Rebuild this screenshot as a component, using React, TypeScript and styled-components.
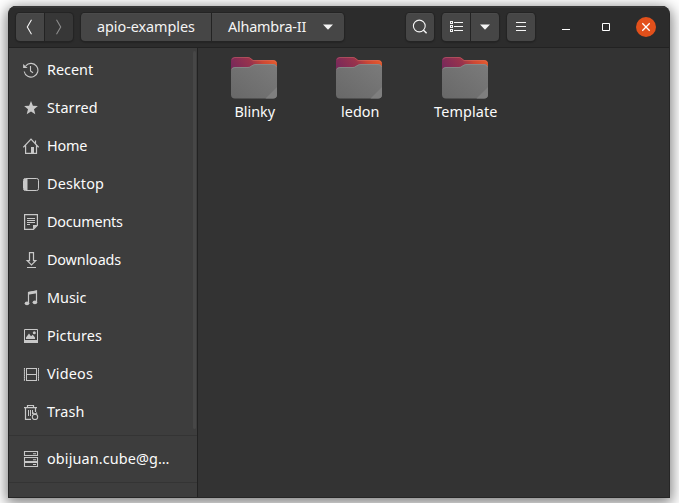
import React from "react";
import styled, { createGlobalStyle } from "styled-components";

const GlobalStyle = createGlobalStyle`
  * { box-sizing: border-box; }
  html, body { margin: 0; background: #fff; overflow: hidden; }
  svg { display: block; flex: none; }
`;

const Desktop = styled.div`
  width: 679px;
  height: 503px;
  padding: 6px 9px 5px 8px;
  overflow: hidden;
  background: #fff;
  font-family: "Noto Sans", sans-serif;
  font-size: 14.4px;
  color: #fbfbfb;
`;

const Window = styled.main`
  width: 662px;
  height: 492px;
  display: flex;
  flex-direction: column;
  border: 1px solid #262626;
  border-top: 0;
  border-radius: 8px 8px 0 0;
  overflow: hidden;
  background: #333;
  box-shadow: 0 3px 14px 2px rgba(0, 0, 0, 0.5);
`;

const HeaderBar = styled.header`
  height: 42px;
  flex: none;
  display: flex;
  align-items: flex-start;
  padding: 7px 13px 0 7px;
  background: #2c2c2c;
  border-bottom: 1px solid #222;
  box-shadow: inset 0 2px #363636;
`;

const ButtonGroup = styled.div<{ $gap: number }>`
  display: flex;
  gap: 1px;
  height: 28px;
  margin-right: ${(p) => p.$gap}px;
  border-radius: 4px;
  overflow: hidden;
  background: #232323;
  box-shadow: 0 0 0 1px #242424, 0 1px 1px 1px #252525;
  flex: none;
`;

const HeaderButton = styled.button<{ $width?: number; $dim?: boolean }>`
  width: ${(p) => p.$width ?? 28}px;
  height: 28px;
  display: flex;
  align-items: center;
  justify-content: center;
  padding: 0;
  border: 0;
  background: ${(p) => (p.$dim ? "#373737" : "#464646")};
  color: ${(p) => (p.$dim ? "#8d8d8d" : "#f4f4f4")};
  box-shadow: ${(p) => (p.$dim ? "none" : "inset 0 1px #4b4b4b")};
  font: inherit;
`;

const Label = styled.span<{ $track?: number }>`
  white-space: nowrap;
  line-height: 20px;
  letter-spacing: ${(p) => p.$track ?? 0}px;
`;

const PathButton = styled(HeaderButton)`
  justify-content: flex-start;
  padding-left: 16px;
  & > svg { margin: 0 11px 0 auto; }
`;

const Spacer = styled.div`
  flex: 1;
`;

const WindowControls = styled.div`
  display: flex;
  align-items: center;
  gap: 32px;
  width: 94px;
  height: 28px;
  & > svg:last-child { margin-left: -6px; }
`;

const Body = styled.div`
  flex: 1;
  min-height: 0;
  display: flex;
`;

const Sidebar = styled.nav`
  width: 189px;
  flex: none;
  display: flex;
  border-right: 1px solid #222;
  background: #3d3d3d;
`;

const Places = styled.div`
  flex: 1;
  min-width: 0;
  padding-top: 3px;
`;

const PlaceRow = styled.div`
  height: 38px;
  display: flex;
  align-items: center;
  gap: 8px;
  padding-left: 14px;
  color: #fbfbfb;
  & > svg { color: #c8c8c8; }
`;

const Divider = styled.div`
  height: 1px;
  margin: 4px -4px 4px 0;
  background: #343434;
`;

const ScrollTrack = styled.div`
  width: 4px;
  padding-top: 3px;
`;

const ScrollThumb = styled.div`
  width: 3px;
  height: 378px;
  border-radius: 2px;
  background: #474747;
`;

const FileGrid = styled.section`
  flex: 1;
  display: grid;
  grid-template-columns: repeat(3, 105.5px);
  align-content: start;
  padding: 9px 0 0 4px;
`;

const FileTile = styled.div`
  display: flex;
  flex-direction: column;
  align-items: center;
  gap: 3px;
  & > svg { margin-right: 2px; }
`;

const line = { fill: "none", stroke: "currentColor" };

const Arrow = ({ flip }: { flip?: boolean }) => (
  <svg width="16" height="16" viewBox="0 0 16 16">
    <path {...line} strokeWidth="1.1" d={flip ? "M5.5.8 9.700 8l-4.200 7.200" : "M9.500.8 5.300 8l4.200 7.200"} />
  </svg>
);

const Caret = () => (
  <svg width="10" height="6" viewBox="0 0 10 6">
    <path fill="currentColor" d="M0 .5h10L5 5.700z" />
  </svg>
);

const SearchIcon = () => (
  <svg width="16" height="16" viewBox="0 0 16 16">
    <circle {...line} strokeWidth="1.100" cx="7.300" cy="7" r="5.900" />
    <path {...line} strokeWidth="1.500" d="m11.300 11 3.300 3.300" />
  </svg>
);

const ListIcon = () => (
  <svg width="14" height="12" viewBox="0 0 14 12" shapeRendering="crispEdges">
    <path {...line} d="M1.500.5h2v2h-2zM1.500 4.500h2v2h-2zM1.500 8.500h2v2h-2zM5 1.500h9M5 5.500h9M5 9.500h9" />
  </svg>
);

const MenuIcon = () => (
  <svg width="10" height="10" viewBox="0 0 10 10" shapeRendering="crispEdges">
    <path {...line} d="M0 .5h10M0 4.500h10M0 8.500h10" />
  </svg>
);

const MinimizeIcon = () => (
  <svg width="8" height="8" viewBox="0 0 8 8">
    <path fill="#fff" d="M0 6h8v1H0z" />
  </svg>
);

const MaximizeIcon = () => (
  <svg width="8" height="8" viewBox="0 0 8 8">
    <path fill="none" stroke="#fff" d="M.5.5h7v7h-7z" />
  </svg>
);

const CloseIcon = () => (
  <svg width="20" height="20" viewBox="0 0 20 20">
    <circle cx="10" cy="10" r="10" fill="#e2501b" />
    <path d="m6.300 6.300 7.400 7.400m0-7.400-7.400 7.400" stroke="#fff" strokeWidth="1.300" />
  </svg>
);

const glyphs: Record<string, React.ReactNode> = {
  recent: (
    <>
      <path {...line} strokeWidth="1.100" d="M2.700 3.800A6.900 6.900 0 1 1 1.200 9.500M7.500 4v5l2.500 1.800" />
      <path fill="currentColor" d="M.1 2v4h4.500z" />
    </>
  ),
  star: <path fill="currentColor" d="m8 1 1.900 4.800 5 .3-3.900 3.200 1.300 5L8 11.500l-4.300 2.800 1.300-5L1.100 6.100l5-.3z" />,
  home: (
    <>
      <path {...line} strokeWidth="1.200" d="M.4 9.300 8 1.100l7.600 8.200M2.600 7.500v7.900h10.900V7.500M12.500 5.500V2.500" />
      <path fill="currentColor" d="M8 9h3v6.500H8z" />
    </>
  ),
  desktop: (
    <>
      <rect {...line} x=".5" y="2.500" width="15" height="12" rx="1.800" />
      <path fill="currentColor" d="M1 3h3.500v11H1z" />
    </>
  ),
  documents: (
    <>
      <path {...line} strokeWidth="1.200" d="M1.600.6h12.800v10.600l-4 4.200H1.600z" />
      <path {...line} d="M4 4.500h8M4 6.500h8M4 8.500h8M4 10.500h3" />
      <path fill="currentColor" d="M10 15.500V11h4.500z" />
    </>
  ),
  downloads: <path {...line} strokeWidth="1.200" d="M6.500.6h4v8h2.300l-4.300 4.300-4.300-4.300h2.300zM4 15.500h9" />,
  music: (
    <>
      <path {...line} strokeWidth="1.200" d="M5.500 13V2.500L13.500 1v11" />
      <path fill="currentColor" d="M5 2 14 .4v2.800L5 4.800z" />
      <ellipse fill="currentColor" cx="4" cy="13.300" rx="2.300" ry="1.900" />
      <ellipse fill="currentColor" cx="11.900" cy="12.300" rx="2.300" ry="1.900" />
    </>
  ),
  pictures: (
    <>
      <path {...line} d="M1.500 1.500h13v12h-13z" />
      <path fill="currentColor" d="M1 12h14v3H1zM3 11V9.500L6 5.500l2 2.800 1.800-1.500 2.200 2.700V11z" />
      <circle fill="currentColor" cx="11.300" cy="4.700" r="1.500" />
    </>
  ),
  videos: (
    <>
      <path {...line} d="M3.500 2v13M13.500 2v13M3 2.500h11M3 8.500h11M3 14.500h11" />
      <path {...line} strokeDasharray="1.200 1" d="M1.500 2v13M15.500 2v13" />
      <path {...line} strokeWidth=".8" d="M1.400 2v13M15.600 2v13" />
    </>
  ),
  trash: (
    <>
      <path {...line} strokeWidth="1.200" d="M1 3.600h13M4.500 3V1.500h6V3M2.500 4v11.400H8M12.500 4v4" />
      <path {...line} d="M5.500 6v6M7.500 6v6M9.500 6v4" />
      <circle {...line} strokeWidth="1.100" cx="12" cy="12.900" r="2.700" />
      <path {...line} strokeWidth="1.100" d="m9.800 8.800 2.200 1.500 2.100-1.500" />
    </>
  ),
  server: (
    <path {...line} strokeWidth="1.100" d="M1.500.5h13v4h-13zM1.500 6.500h13v4h-13zM1.500 11.500h13v4h-13zM10 2.700h3M10 8.700h3M10 13.500h3" />
  ),
};

const PlaceIcon = ({ name }: { name: string }) => (
  <svg width="16" height="16" viewBox="0 0 16 16">{glyphs[name]}</svg>
);

const FolderIcon = ({ id }: { id: string }) => (
  <svg width="46" height="42" viewBox="0 0 46 42">
    <defs>
      <linearGradient id={`${id}-back`} x1="0" x2="1" y1=".35" y2="0">
        <stop offset="0" stopColor="#79295a" />
        <stop offset=".42" stopColor="#99334c" />
        <stop offset=".65" stopColor="#cc4835" />
        <stop offset="1" stopColor="#ee6029" />
      </linearGradient>
      <linearGradient id={`${id}-front`} x1="0" x2="1" y1="1" y2="0">
        <stop offset="0" stopColor="#686868" />
        <stop offset="1" stopColor="#7b7b7b" />
      </linearGradient>
    </defs>
    <path fill={`url(#${id}-back)`} d="M0 4q0-4 4-4h13q2 0 3.200 1.500L22 3h20q4 0 4 4v15H0z" />
    <path fill="none" stroke="#d47770" strokeOpacity=".4" d="M1 2.500Q2 .5 4 .5h13q2 0 3.200 1.500L22 3.500h20q2.500 0 3.500 2.500" />
    <path fill={`url(#${id}-front)`} d="M0 14q0-4 4-4h13q2 0 3.200-1.300L22 7.700Q23 7 25 7h17q4 0 4 4v26.500q0 4-4 4H4q-4 0-4-4z" />
    <path fill="none" stroke="#929292" strokeOpacity=".6" d="M.8 12.500q1-2 3.200-2h13q2 0 3.200-1.300L22 8.200q1-.7 3-.7h17q2.500 0 3.500 2.500" />
    <path fill="#7f7f7f" d="M34.500 41.500 46 30v7.500q0 4-4 4z" />
  </svg>
);

const places = [
  { icon: "recent", text: "Recent", track: 0 },
  { icon: "star", text: "Starred", track: 0.15 },
  { icon: "home", text: "Home", track: -0.2 },
  { icon: "desktop", text: "Desktop", track: 0.15 },
  { icon: "documents", text: "Documents", track: -0.2 },
  { icon: "downloads", text: "Downloads", track: -0.15 },
  { icon: "music", text: "Music", track: 0 },
  { icon: "pictures", text: "Pictures", track: 0.1 },
  { icon: "videos", text: "Videos", track: 0.2 },
  { icon: "trash", text: "Trash", track: 0.15 },
];

const folders = [
  { text: "Blinky", track: 0 },
  { text: "ledon", track: 0 },
  { text: "Template", track: 0.1 },
];

export default function App() {
  return (
    <>
      <GlobalStyle />
      <Desktop>
        <Window>
          <HeaderBar>
            <ButtonGroup $gap={8}>
              <HeaderButton aria-label="Back"><Arrow /></HeaderButton>
              <HeaderButton $dim aria-label="Forward"><Arrow flip /></HeaderButton>
            </ButtonGroup>
            <ButtonGroup $gap={0}>
              <PathButton $width={130}><Label $track={-0.05}>apio-examples</Label></PathButton>
              <PathButton $width={132}><Label $track={-0.2}>Alhambra-II</Label><Caret /></PathButton>
            </ButtonGroup>
            <Spacer />
            <ButtonGroup $gap={8}>
              <HeaderButton aria-label="Search"><SearchIcon /></HeaderButton>
            </ButtonGroup>
            <ButtonGroup $gap={8}>
              <HeaderButton aria-label="List view"><ListIcon /></HeaderButton>
              <HeaderButton aria-label="View options"><Caret /></HeaderButton>
            </ButtonGroup>
            <ButtonGroup $gap={27}>
              <HeaderButton aria-label="Menu"><MenuIcon /></HeaderButton>
            </ButtonGroup>
            <WindowControls>
              <MinimizeIcon />
              <MaximizeIcon />
              <CloseIcon />
            </WindowControls>
          </HeaderBar>
          <Body>
            <Sidebar>
              <Places>
                {places.map((p) => (
                  <PlaceRow key={p.text}>
                    <PlaceIcon name={p.icon} />
                    <Label $track={p.track}>{p.text}</Label>
                  </PlaceRow>
                ))}
                <Divider />
                <PlaceRow>
                  <PlaceIcon name="server" />
                  <Label $track={0.12}>obijuan.cube@g…</Label>
                </PlaceRow>
                <Divider />
              </Places>
              <ScrollTrack><ScrollThumb /></ScrollTrack>
            </Sidebar>
            <FileGrid>
              {folders.map((f) => (
                <FileTile key={f.text}>
                  <FolderIcon id={f.text} />
                  <Label $track={f.track}>{f.text}</Label>
                </FileTile>
              ))}
            </FileGrid>
          </Body>
        </Window>
      </Desktop>
    </>
  );
}
